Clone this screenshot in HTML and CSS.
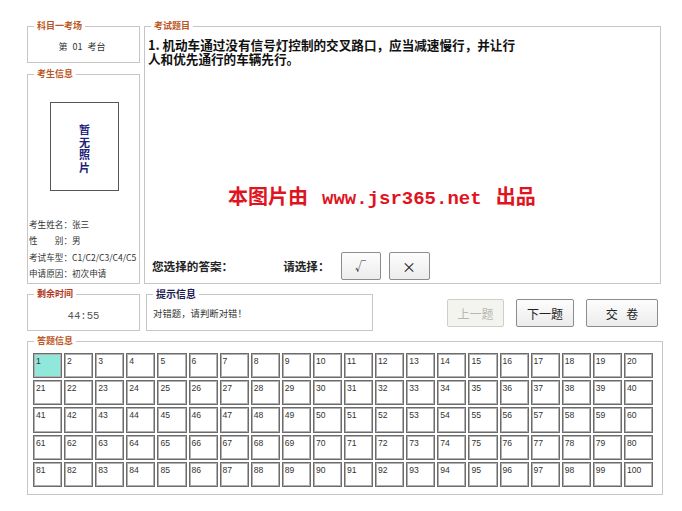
FILE: index.html
```html
<!DOCTYPE html>
<html lang="zh-CN">
<head>
<meta charset="utf-8">
<title>科目一考试</title>
<link rel="stylesheet" href="styles.css">
</head>
<body>
<div class="page">
  <div class="top">
    <div class="leftcol">
      <section class="box box-exam">
        <div class="legend">科目一考场</div>
        <div class="seat">第 01 考台</div>
      </section>
      <section class="box box-student">
        <div class="legend">考生信息</div>
        <div class="photo"><span class="photo-text">暂无照片</span></div>
        <ul class="info">
          <li>考生姓名：张三</li>
          <li>性<span class="gap2"></span>别：男</li>
          <li>考试车型：C1/C2/C3/C4/C5</li>
          <li>申请原因：初次申请</li>
        </ul>
      </section>
    </div>
    <section class="box box-question">
      <div class="legend">考试题目</div>
      <p class="question">1. 机动车通过没有信号灯控制的交叉路口，应当减速慢行，并让行<br>人和优先通行的车辆先行。</p>
      <p class="watermark">本图片由<span class="latin">www.jsr365.net</span>出品</p>
      <div class="answer-row">
        <span class="lbl">您选择的答案：</span>
        <span class="lbl choose">请选择：</span>
        <button class="btn opt">√</button>
        <button class="btn opt opt-x">×</button>
      </div>
    </section>
  </div>
  <div class="mid">
    <section class="box box-time">
      <div class="legend legend-red">剩余时间</div>
      <div class="time">44:55</div>
    </section>
    <section class="box box-tip">
      <div class="legend legend-navy">提示信息</div>
      <div class="tip">对错题，请判断对错！</div>
    </section>
    <div class="nav">
      <button class="btn nav-btn disabled">上一题</button>
      <button class="btn nav-btn">下一题</button>
      <button class="btn nav-btn submit">交 卷</button>
    </div>
  </div>
  <section class="box box-grid">
    <div class="legend">答题信息</div>
    <div class="grid" id="grid">
      <div class="cell current">1</div><div class="cell">2</div><div class="cell">3</div><div class="cell">4</div><div class="cell">5</div><div class="cell">6</div><div class="cell">7</div><div class="cell">8</div><div class="cell">9</div><div class="cell">10</div><div class="cell">11</div><div class="cell">12</div><div class="cell">13</div><div class="cell">14</div><div class="cell">15</div><div class="cell">16</div><div class="cell">17</div><div class="cell">18</div><div class="cell">19</div><div class="cell">20</div>
      <div class="cell">21</div><div class="cell">22</div><div class="cell">23</div><div class="cell">24</div><div class="cell">25</div><div class="cell">26</div><div class="cell">27</div><div class="cell">28</div><div class="cell">29</div><div class="cell">30</div><div class="cell">31</div><div class="cell">32</div><div class="cell">33</div><div class="cell">34</div><div class="cell">35</div><div class="cell">36</div><div class="cell">37</div><div class="cell">38</div><div class="cell">39</div><div class="cell">40</div>
      <div class="cell">41</div><div class="cell">42</div><div class="cell">43</div><div class="cell">44</div><div class="cell">45</div><div class="cell">46</div><div class="cell">47</div><div class="cell">48</div><div class="cell">49</div><div class="cell">50</div><div class="cell">51</div><div class="cell">52</div><div class="cell">53</div><div class="cell">54</div><div class="cell">55</div><div class="cell">56</div><div class="cell">57</div><div class="cell">58</div><div class="cell">59</div><div class="cell">60</div>
      <div class="cell">61</div><div class="cell">62</div><div class="cell">63</div><div class="cell">64</div><div class="cell">65</div><div class="cell">66</div><div class="cell">67</div><div class="cell">68</div><div class="cell">69</div><div class="cell">70</div><div class="cell">71</div><div class="cell">72</div><div class="cell">73</div><div class="cell">74</div><div class="cell">75</div><div class="cell">76</div><div class="cell">77</div><div class="cell">78</div><div class="cell">79</div><div class="cell">80</div>
      <div class="cell">81</div><div class="cell">82</div><div class="cell">83</div><div class="cell">84</div><div class="cell">85</div><div class="cell">86</div><div class="cell">87</div><div class="cell">88</div><div class="cell">89</div><div class="cell">90</div><div class="cell">91</div><div class="cell">92</div><div class="cell">93</div><div class="cell">94</div><div class="cell">95</div><div class="cell">96</div><div class="cell">97</div><div class="cell">98</div><div class="cell">99</div><div class="cell">100</div>
    </div>
  </section>
</div>
</body>
</html>
```

FILE: styles.css
```css
* { box-sizing: border-box; }

html, body {
  margin: 0;
  padding: 0;
  background: #fff;
}

body {
  font-family: "Noto Sans CJK SC", "Liberation Sans", sans-serif;
  color: #222;
}

.page {
  padding: 26px 0 0 27px;
}

.box {
  border: 1px solid #c6c6c6;
  background: #fff;
  display: flex;
  flex-direction: column;
}

.legend {
  width: fit-content;
  margin: -7px 0 0 6px;
  padding: 0 3px;
  background: #fff;
  font-size: 9px;
  line-height: 12px;
  font-weight: bold;
  color: #bb5522;
}
.legend-red { color: #b0361a; }
.legend-navy { color: #1e1e50; font-size: 10px; }

/* top section */
.top {
  display: flex;
  gap: 4px;
}

.leftcol {
  width: 113px;
  display: flex;
  flex-direction: column;
  gap: 11px;
}

.box-exam { height: 37px; }
.seat {
  margin-top: 9px;
  text-align: center;
  font-size: 9px;
  line-height: 12px;
  color: #333;
  padding-right: 3px;
  word-spacing: 3px;
}

.box-student { height: 210px; }

.photo {
  margin: 22px 0 0 22px;
  width: 69px;
  height: 89px;
  border: 1px solid #555;
  display: flex;
  align-items: center;
  justify-content: center;
}
.photo-text {
  width: 12px;
  font-size: 11px;
  line-height: 12.5px;
  font-weight: bold;
  color: #22227a;
  text-align: center;
  margin-top: 3px;
}

.info {
  list-style: none;
  margin: 25px 0 0 0;
  padding: 0 0 0 1px;
  font-size: 8.6px;
  line-height: 16.3px;
  color: #333;
}
.gap2 { display: inline-block; width: 2em; }

.box-question {
  width: 517px;
  height: 258px;
}
.question {
  margin: 6px 0 0 3px;
  font-size: 12.6px;
  line-height: 14px;
  font-weight: bold;
  color: #111;
}
.watermark {
  margin: 119px 0 0 83px;
  font-size: 20px;
  line-height: 22px;
  font-weight: bold;
  color: #e0141e;
  white-space: nowrap;
}
.watermark .latin {
  font-family: "Liberation Mono", monospace;
  font-size: 19px;
  margin: 0 14px;
}

.answer-row {
  margin-top: auto;
  padding: 0 0 3px 7px;
  display: flex;
  align-items: center;
  height: 32px;
}
.lbl {
  font-size: 11.6px;
  font-weight: bold;
  color: #222;
  line-height: 14px;
}
.choose { margin-left: 50px; }

.btn {
  font-family: "Noto Sans CJK SC", "Liberation Sans", sans-serif;
  background: linear-gradient(#fdfdfd, #ececec);
  border: 1px solid #8c8c8c;
  border-radius: 2px;
  color: #222;
  padding: 0;
  margin: 0;
  display: flex;
  align-items: center;
  justify-content: center;
}
.opt {
  width: 40px;
  height: 28px;
  font-size: 11px;
  margin-left: 11px;
}
.opt-x { width: 41px; margin-left: 8px; font-size: 14px; }

/* middle row */
.mid {
  display: flex;
  margin-top: 10px;
  height: 37px;
}
.box-time {
  width: 113px;
  height: 37px;
}
.time {
  margin-top: 9px;
  text-align: center;
  font-family: "Liberation Mono", monospace;
  font-size: 10.6px;
  line-height: 14px;
  color: #555;
}
.box-tip {
  width: 227px;
  height: 37px;
  margin-left: 6px;
}
.tip {
  margin: 7px 0 0 6px;
  font-size: 9.4px;
  line-height: 12px;
  color: #333;
}

.nav {
  display: flex;
  gap: 12px;
  margin: 5px 0 0 74px;
}
.nav-btn {
  height: 28px;
  width: 58px;
  font-size: 12px;
}
.nav-btn.disabled {
  width: 57px;
  background: #f3f3ef;
  border-color: #cfcfc8;
  color: #b8b8b0;
}
.nav-btn.submit {
  width: 72px;
  word-spacing: 6px;
}

/* answer grid */
.box-grid {
  margin-top: 10px;
  width: 636px;
  height: 154px;
}
.grid {
  margin: 6px 0 0 5px;
  width: 620px;
  height: 134px;
  display: grid;
  grid-template-columns: repeat(20, 1fr);
  grid-template-rows: repeat(5, 1fr);
  column-gap: 2px;
  row-gap: 2px;
}
.cell {
  border: 1px solid #6c6c6c;
  box-shadow: inset 0 0 0 1px #b0b0b0;
  background: #fff;
  font-family: "Liberation Sans", sans-serif;
  font-size: 8.6px;
  line-height: 10px;
  color: #333;
  padding: 2px 0 0 2px;
}
.cell.current { background: #8fe8da; }
```
